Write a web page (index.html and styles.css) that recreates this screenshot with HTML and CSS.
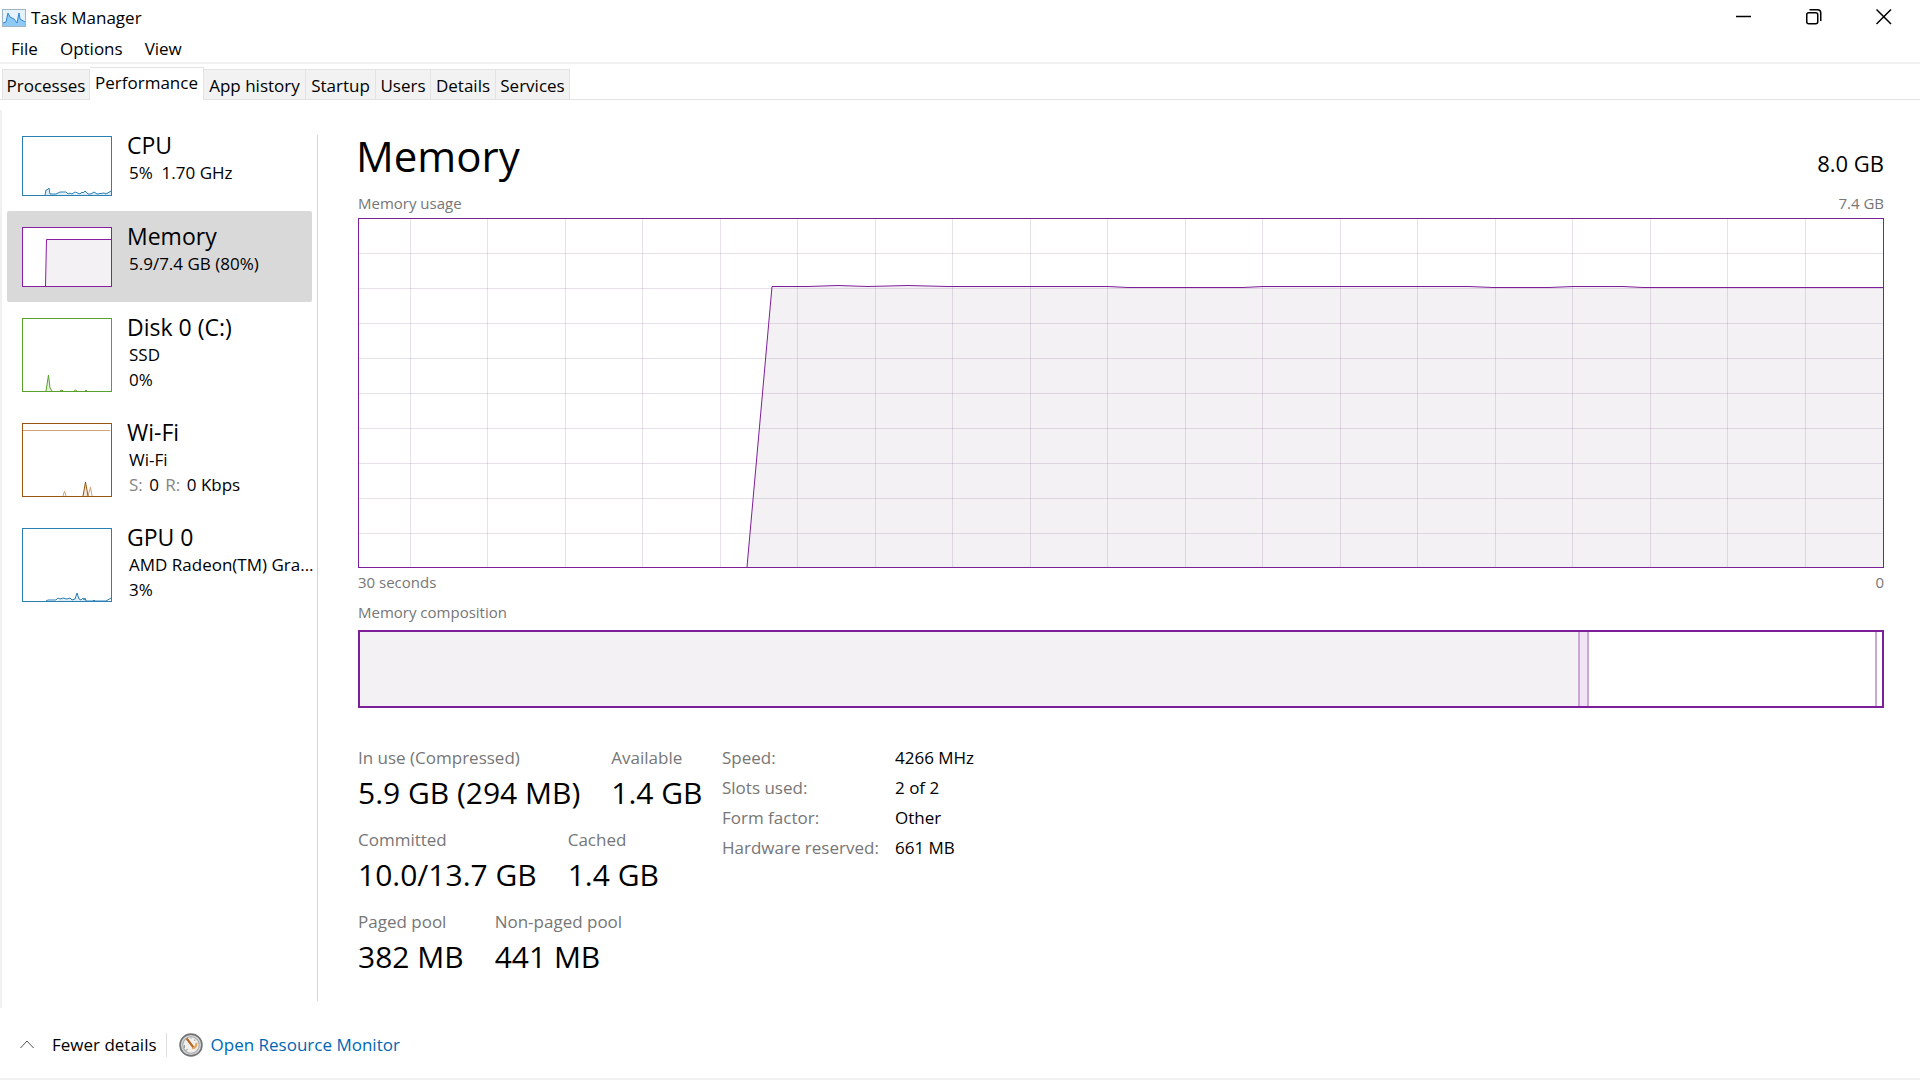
FILE: index.html
```html
<!DOCTYPE html>
<html lang="en">
<head>
<meta charset="utf-8">
<title>Task Manager</title>
<link rel="stylesheet" href="styles.css">
</head>
<body>
<div class="window">
  <header class="titlebar">
    <svg class="app-icon" width="24" height="18" viewBox="0 0 24 18" aria-hidden="true">
      <rect x=".5" y=".5" width="23" height="17" fill="#e6f2fb" stroke="#9fb4c4"/>
      <path d="M1 14L4 13L6 4L8 8L12 10L15 14L17 4L18 10L23 13V17H1Z" fill="#8fcaf6"/>
      <path d="M1 14L4 13L6 4L8 8L12 10L15 14L17 4L18 10L23 13" fill="none" stroke="#2f86d2"/>
    </svg>
    <h1 class="title">Task Manager</h1>
    <div class="caption-buttons">
      <button class="caption" aria-label="Minimize"><svg width="16" height="16" viewBox="0 0 16 16"><path d="M0 7.5H15"/></svg></button>
      <button class="caption" aria-label="Restore"><svg width="16" height="16" viewBox="0 0 16 16"><rect x=".75" y="3.75" width="11" height="11" rx="2"/><path d="M3.5 .75H11.5Q14.75 .75 14.75 4V12"/></svg></button>
      <button class="caption" aria-label="Close"><svg width="16" height="16" viewBox="0 0 16 16"><path d="M.5 .5L15 15M15 .5L.5 15"/></svg></button>
    </div>
  </header>

  <nav class="menubar" aria-label="Menu">
    <button class="menu">File</button>
    <button class="menu">Options</button>
    <button class="menu">View</button>
  </nav>

  <div class="tabs" role="tablist">
    <button class="tab" role="tab">Processes</button>
    <button class="tab active" role="tab" aria-selected="true">Performance</button>
    <button class="tab" role="tab">App history</button>
    <button class="tab" role="tab">Startup</button>
    <button class="tab" role="tab">Users</button>
    <button class="tab" role="tab">Details</button>
    <button class="tab" role="tab">Services</button>
  </div>

  <div class="content">
    <aside class="sidebar">
      <button class="item">
        <svg class="thumb short cpu" viewBox="0 0 90 60">
          <path class="area" d="M23 59L24 54L27 52L28 58L34 58L38 56L46 58L50 57L54 58L63 56L66 58L72 56L76 58L82 57L87 56L89 56V59Z"/>
          <path d="M23 59L24 54H25L27 52L28 58L34 58L38 56L44 56L46 58L48 57L50 58L53 56L58 58L60 56L61 57L63 55L66 58L69 58L72 56L75 58L82 57L84 58L89 55"/>
          <rect x=".5" y=".5" width="89" height="59"/>
        </svg>
        <span class="info"><span class="name">CPU</span><span class="sub">5%&nbsp; 1.70 GHz</span></span>
      </button>
      <button class="item selected">
        <svg class="thumb short mem" viewBox="0 0 90 60">
          <path class="area" d="M23.5 59L24.5 12.5H89.5V59Z"/>
          <path d="M23.5 59L24.5 12.5H89.5"/>
          <rect x=".5" y=".5" width="89" height="59"/>
        </svg>
        <span class="info"><span class="name">Memory</span><span class="sub">5.9/7.4 GB (80%)</span></span>
      </button>
      <button class="item">
        <svg class="thumb disk" viewBox="0 0 90 74">
          <path class="area" d="M24 73L26.500 57L28 70L30 73Z"/>
          <path d="M24 73L26.500 57L28 70L30 73M38 73L40 72L41 73M52 73L53.500 72L55 73M63 73L64 72L65 73"/>
          <rect x=".5" y=".5" width="89" height="73"/>
        </svg>
        <span class="info"><span class="name">Disk 0 (C:)</span><span class="sub">SSD</span><span class="sub">0%</span></span>
      </button>
      <button class="item">
        <svg class="thumb wifi" viewBox="0 0 90 74">
          <path class="soft" d="M1 7.500H88M41 73L42.500 68L44 73M66 73L68.500 64L70 73"/>
          <path class="area" d="M61 73L63.500 59L66 73Z"/>
          <path d="M61 73L63.500 59L66 73"/>
          <rect x=".5" y=".5" width="89" height="73"/>
        </svg>
        <span class="info"><span class="name">Wi-Fi</span><span class="sub">Wi-Fi</span><span class="sub"><span class="dim">S:</span> 0 <span class="dim">R:</span> 0 Kbps</span></span>
      </button>
      <button class="item">
        <svg class="thumb cpu" viewBox="0 0 90 74">
          <path class="area" d="M35 73L38 71L52 71L55 66L57 71L63 72V73Z"/>
          <path d="M24 73L26 72H34L36 70L38 71L41 70L45 71L48 70L50 72L53 71L55 65L57 71L59 72L61 70L62 72L63 70L64 73H71L72 72L73 73H84L89 70"/>
          <rect x=".5" y=".5" width="89" height="73"/>
        </svg>
        <span class="info"><span class="name">GPU 0</span><span class="sub">AMD Radeon(TM) Gra...</span><span class="sub">3%</span></span>
      </button>
    </aside>

    <main class="panel">
      <div class="heading"><h2>Memory</h2><span class="total">8.0 GB</span></div>
      <div class="caption-row"><span>Memory usage</span><span>7.4 GB</span></div>
      <svg class="graph" viewBox="0 0 1526 350" preserveAspectRatio="none" role="img" aria-label="Memory usage">
        <defs>
          <pattern id="rows" width="1526" height="35" patternUnits="userSpaceOnUse"><path d="M0 .5H1526" class="grid"/></pattern>
        </defs>
        <path class="area" d="M389 349L414 68.500H450L480 67.500L510 68.500L550 67.500L590 68.500H750L770 69.500H885L905 68.500H1111L1135 69.500H1191L1215 68.500H1265L1285 69.500H1525V349Z"/>
        <rect width="1526" height="350" fill="url(#rows)"/>
        <path class="grid" d="M52.500 0V350M129.500 0V350M207.500 0V350M284.500 0V350M362.500 0V350M439.500 0V350M517.500 0V350M594.500 0V350M672.500 0V350M749.500 0V350M827.500 0V350M904.500 0V350M982.500 0V350M1059.500 0V350M1137.500 0V350M1214.500 0V350M1292.500 0V350M1369.500 0V350M1447.500 0V350"/>
        <path class="line" d="M389 349L414 68.500H450L480 67.500L510 68.500L550 67.500L590 68.500H750L770 69.500H885L905 68.500H1111L1135 69.500H1191L1215 68.500H1265L1285 69.500H1525"/>
        <rect class="line" x=".5" y=".5" width="1525" height="349"/>
      </svg>
      <div class="caption-row axis"><span>30 seconds</span><span>0</span></div>
      <div class="caption-row composition-label"><span>Memory composition</span></div>
      <div class="composition">
        <div class="used"></div><div class="modified"></div><div class="standby"></div><div class="free"></div>
      </div>

      <div class="stats">
        <div class="figures">
          <dl class="figure-row">
            <div><dt>In use (Compressed)</dt><dd>5.9 GB (294 MB)</dd></div>
            <div><dt>Available</dt><dd>1.4 GB</dd></div>
          </dl>
          <dl class="figure-row">
            <div><dt>Committed</dt><dd>10.0/13.7 GB</dd></div>
            <div><dt>Cached</dt><dd>1.4 GB</dd></div>
          </dl>
          <dl class="figure-row">
            <div><dt>Paged pool</dt><dd>382 MB</dd></div>
            <div><dt>Non-paged pool</dt><dd>441 MB</dd></div>
          </dl>
        </div>
        <table class="facts">
          <tr><th scope="row">Speed:</th><td>4266 MHz</td></tr>
          <tr><th scope="row">Slots used:</th><td>2 of 2</td></tr>
          <tr><th scope="row">Form factor:</th><td>Other</td></tr>
          <tr><th scope="row">Hardware reserved:</th><td>661 MB</td></tr>
        </table>
      </div>
    </main>
  </div>

  <footer class="footer">
    <button class="fewer"><svg width="14" height="9" viewBox="0 0 14 9"><path d="M.5 8L7 1L13.500 8"/></svg>Fewer details</button>
    <a class="monitor" href="#">
      <svg width="24" height="24" viewBox="0 0 22 22" aria-hidden="true">
        <circle cx="11" cy="11" r="10" fill="#d4d5d5" stroke="#707274" stroke-width="1.500"/>
        <circle cx="11" cy="11" r="7.500" fill="#f0efec" stroke="#a6a8aa"/>
        <path d="M5 14V11M7 6L8 7M11 4V5M15 6L14 7M6 16L8 15" stroke="#9a9da0"/>
        <path d="M12 14Q16 14 16 9" fill="none" stroke="#e3a765" stroke-width="2"/>
        <path d="M7 5L13 13" stroke="#b5651d" stroke-width="2"/>
      </svg>Open Resource Monitor</a>
  </footer>
</div>
</body>
</html>
```

FILE: styles.css
```css
* { box-sizing: border-box; }

body {
  margin: 0;
  background: #fff;
  color: #000;
  font: 17px/24px "Open Sans", "Noto Sans", sans-serif;
}

button {
  padding: 0;
  border: 0;
  background: none;
  color: inherit;
  font: inherit;
  text-align: left;
}

h1, h2, dl, dt, dd { margin: 0; font-weight: 400; }

.window {
  display: flex;
  flex-direction: column;
  min-height: 100vh;
  border-bottom: 2px solid #f0f0f0;
}

/* Title bar and menu */
.titlebar { display: flex; align-items: center; height: 36px; padding: 0 2px; }
.title { margin-left: 5px; font-size: 17px; }
.caption-buttons { display: flex; align-self: flex-start; margin-left: auto; margin-right: -1px; }
.caption { display: flex; align-items: center; justify-content: center; width: 70px; height: 34px; }
.caption svg { fill: none; stroke: #000; stroke-width: 1.5; }

.menubar { display: flex; align-items: flex-end; gap: 22px; height: 28px; padding: 0 11px 1px; border-bottom: 2px solid #f0f0f0; }

/* Tabs */
.tabs {
  display: grid;
  grid-template-columns: 88px 114px 102px 70px 55px 65px 74px;
  align-items: end;
  height: 36px;
  padding-left: 2px;
  border-bottom: 1px solid #e3e3e3;
}
.tab { height: 30px; padding-top: 2px; border: 1px solid #e3e3e3; border-width: 1px 1px 0 0; background: #f2f2f2; text-align: center; white-space: nowrap; }
.tab:first-child { border-left-width: 1px; }
.tab.active { height: 33px; margin-bottom: -1px; padding: 0 0 2px; background: #fff; }

/* Body */
.content { display: flex; flex: 1; margin-top: 10px; padding-bottom: 7px; border-left: 2px solid #f0f0f0; }
.sidebar { flex: none; width: 316px; margin-top: 25px; border-right: 1px solid #d5d5d5; }
.item { display: flex; width: 305px; margin-left: 5px; padding: 16px 0 15px 15px; border-radius: 2px; }
.item:first-child { margin-top: -15px; }
.item.selected { background: #d9d9d9; }
.thumb { flex: none; width: 90px; height: 74px; background: #fff; fill: none; stroke: currentColor; }
.thumb.short { height: 60px; }
.thumb .area { stroke: none; fill: currentColor; fill-opacity: .15; }
.cpu { color: #2a7fb5; }
.mem { color: #8a1ea0; }
.mem .area { fill: #f4f1f5; fill-opacity: 1; }
.disk { color: #5aa02c; }
.wifi { color: #96570f; }
.wifi .soft { stroke: #d3a276; }
.info { display: flex; flex-direction: column; margin: -6px 0; padding-left: 15px; }
.name { font-size: 23px; line-height: 30px; }
.sub { padding-left: 2px; line-height: 25px; white-space: nowrap; }
.dim { margin-right: 2px; color: #858585; }
.sub .dim + .dim { margin-left: 2px; }

/* Memory panel */
.panel { flex: 1; min-width: 0; padding: 21px 36px 0 40px; }
.heading { display: flex; align-items: baseline; justify-content: space-between; height: 60px; line-height: 50px; }
.heading h2 { margin-left: -2px; font-size: 42px; }
.total { font-size: 22px; }
.caption-row { display: flex; justify-content: space-between; height: 27px; color: #767676; font-size: 15px; line-height: 24px; }
.graph { display: block; width: 100%; height: 350px; fill: none; }
.graph .area { fill: #f4f1f5; }
.grid { stroke: #8c7896; stroke-opacity: .22; }
.line { stroke: #7d1f99; }
.axis { height: 31px; line-height: 28px; }
.composition-label { height: 31px; line-height: 26px; }
.composition { display: flex; height: 78px; border: 2px solid #7d1f99; }
.composition > * { border-right: 2px solid #c9a9d3; }
.composition .used { flex: 1220; background: #f4f1f5; }
.composition .modified { flex: 0 0 9px; background: #f1e4f4; }
.composition .standby { flex: 286; }
.composition .free { flex: 0 0 5px; border: 0; }

.stats { display: flex; margin-top: 38px; }
.figures { width: 364px; }
.figure-row { display: flex; gap: 31px; height: 82px; color: #767676; white-space: nowrap; }
.figure-row dd { margin-top: 4px; color: #000; font-size: 30px; line-height: 38px; }
.facts { border-collapse: collapse; margin-top: -3px; align-self: flex-start; }
.facts th, .facts td { height: 30px; padding: 0; text-align: left; font-weight: 400; white-space: nowrap; }
.facts th { width: 173px; color: #767676; }

/* Footer */
.footer { display: flex; align-items: center; height: 70px; padding: 3px 20px 0; }
.fewer { display: flex; align-items: center; gap: 18px; padding-right: 9px; }
.fewer svg { fill: none; stroke: #555; }
.monitor { display: flex; align-items: center; gap: 8px; padding-left: 12px; border-left: 1px solid #ddd; color: #0066b4; line-height: 16px; text-decoration: none; }
```
